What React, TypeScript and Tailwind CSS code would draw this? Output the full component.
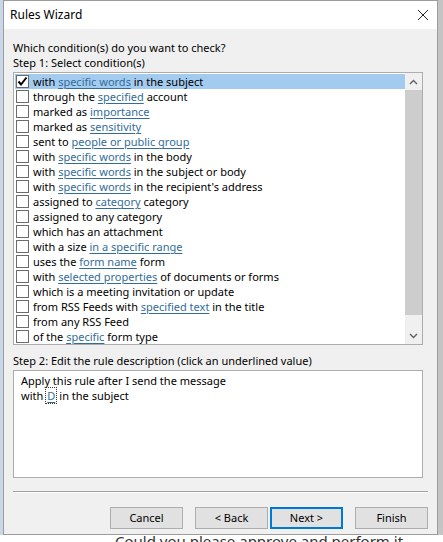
import { ReactNode } from "react";

const FONT = { fontFamily: '"Noto Sans", "Open Sans", sans-serif' };

// link parts are marked with [brackets]
const CONDITIONS = [
  "with [specific words] in the subject",
  "through the [specified] account",
  "marked as [importance]",
  "marked as [sensitivity]",
  "sent to [people or public group]",
  "with [specific words] in the body",
  "with [specific words] in the subject or body",
  "with [specific words] in the recipient's address",
  "assigned to [category] category",
  "assigned to any category",
  "which has an attachment",
  "with a size [in a specific range]",
  "uses the [form name] form",
  "with [selected properties] of documents or forms",
  "which is a meeting invitation or update",
  "from RSS Feeds with [specified text] in the title",
  "from any RSS Feed",
  "of the [specific] form type",
];

function Linked({ text }: { text: string }) {
  const parts = text.split(/(\[[^\]]+\])/).filter(Boolean);
  return (
    <>
      {parts.map((part, i) =>
        part.startsWith("[") ? (
          <span key={i} className="text-[#336c99] underline underline-offset-2 decoration-[#336c99]">
            {part.slice(1, -1)}
          </span>
        ) : (
          <span key={i}>{part}</span>
        )
      )}
    </>
  );
}

function Checkbox({ checked }: { checked?: boolean }) {
  return (
    <div className="w-[13px] h-[13px] border border-[#6b6b6b] bg-white flex items-center justify-center shrink-0">
      {checked ? (
        <svg width="11" height="11" viewBox="0 0 11 11">
          <path d="M1.5 5.5 L4 8.5 L9.5 1.5" fill="none" stroke="#000" strokeWidth="2" />
        </svg>
      ) : null}
    </div>
  );
}

function Row({ text, selected }: { text: string; selected?: boolean }) {
  return (
    <div className={`h-[15px] flex items-center pl-[1px] ${selected ? "bg-[#a3cbef]" : ""}`}>
      <Checkbox checked={selected} />
      <div className="ml-[4px] whitespace-nowrap leading-[15px]">
        <Linked text={text} />
      </div>
    </div>
  );
}

function Chevron({ up }: { up?: boolean }) {
  return (
    <div className="h-[17px] flex items-center justify-center">
      <svg width="9" height="6" viewBox="0 0 9 6">
        <path
          d={up ? "M1 5 L4.5 1.5 L8 5" : "M1 1 L4.5 4.5 L8 1"}
          fill="none"
          stroke="#606060"
          strokeWidth="1.4"
        />
      </svg>
    </div>
  );
}

function Button({ children, primary }: { children: ReactNode; primary?: boolean }) {
  return (
    <button
      className={`w-[73px] h-[22px] bg-[#e1e1e1] text-[11px] text-black flex items-center justify-center ${
        primary ? "border-2 border-[#0078d7]" : "border border-[#adadad]"
      }`}
    >
      {children}
    </button>
  );
}

export default function App() {
  return (
    <div className="w-[443px] h-[542px] overflow-hidden bg-white text-[11px] text-black" style={FONT}>
      <div className="flex h-[535px]">
        <div className="w-[3px] bg-[#c9d8e8]" />
        <div className="w-[435px] flex flex-col border border-[#9c9c9c] bg-[#f0f0f0]">
          <div className="h-[28px] bg-white flex items-center justify-between pl-[6px] pr-[8px]">
            <span className="text-[12px]">Rules Wizard</span>
            <svg width="12" height="12" viewBox="0 0 12 12">
              <path d="M1 1 L11 11 M11 1 L1 11" stroke="#222" strokeWidth="1" />
            </svg>
          </div>
          <div className="flex flex-col px-[9px] pt-[11px]">
            <div className="leading-[15px]">Which condition(s) do you want to check?</div>
            <div className="leading-[15px]">Step 1: Select condition(s)</div>
            <div className="mt-[2px] w-[410px] h-[273px] border border-[#adadad] bg-white flex">
              <div className="flex-1 pt-[1px] pl-[1px]">
                {CONDITIONS.map((c, i) => (
                  <Row key={i} text={c} selected={i === 0} />
                ))}
              </div>
              <div className="w-[17px] bg-[#f0f0f0] flex flex-col">
                <Chevron up />
                <div className="h-[225px] bg-[#cdcdcd]" />
                <div className="flex-1" />
                <Chevron />
              </div>
            </div>
            <div className="mt-[8px] leading-[15px]">Step 2: Edit the rule description (click an underlined value)</div>
            <div className="mt-[2px] w-[410px] h-[108px] border border-[#adadad] bg-white pl-[7px] pt-[2px]">
              <div className="leading-[15px]">Apply this rule after I send the message</div>
              <div className="leading-[15px] flex items-center">
                <span>with</span>
                <span className="ml-[3px] px-[1px] outline-1 outline-dotted outline-[#333] text-[#336c99] underline underline-offset-2">
                  D
                </span>
                <span className="ml-[3px]">in the subject</span>
              </div>
            </div>
            <div className="mt-[13px] h-[1px] bg-[#a0a0a0] w-[415px]" />
            <div className="h-[1px] bg-white w-[415px]" />
            <div className="mt-[14px] flex justify-end pr-0 w-[415px]">
              <Button>Cancel</Button>
              <div className="ml-[12px]">
                <Button>&lt; Back</Button>
              </div>
              <div className="ml-[2px]">
                <Button primary>Next &gt;</Button>
              </div>
              <div className="ml-[12px]">
                <Button>Finish</Button>
              </div>
            </div>
          </div>
        </div>
        <div className="flex-1 bg-[#c4c4c4]" />
      </div>
      <div className="pl-[115px] text-[15px] leading-[18px] text-[#333] -mt-[3px] whitespace-nowrap">
        Could you please approve and perform it
      </div>
    </div>
  );
}
